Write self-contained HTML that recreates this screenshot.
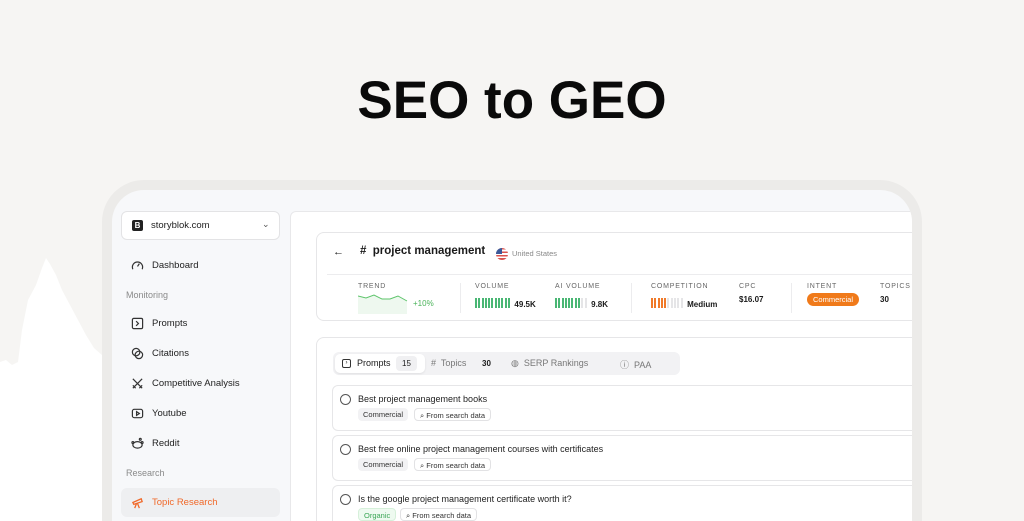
<!DOCTYPE html>
<html style="width:1024px;height:521px;overflow:hidden"><head><meta charset="utf-8"><style>
*{box-sizing:border-box;margin:0;padding:0}
body{width:1024px;height:521px;overflow:hidden;background:#f6f5f3;font-family:"Liberation Sans",sans-serif;position:relative;color:#1a1a1a}
.abs{position:absolute}
h1{position:absolute;top:70px;left:0;width:1024px;text-align:center;font-size:53px;font-weight:700;color:#0a0a0a}
.bezel{left:102px;top:180px;width:820px;height:341px;background:#ecebe9;border-radius:42px 42px 0 0}
.screen{left:112px;top:190px;width:800px;height:331px;background:#f7f8fa;border-radius:32px 32px 0 0;overflow:hidden}
.nav{position:absolute;left:19px;font-size:9.5px;color:#222;display:flex;align-items:center;gap:8px}
.nav svg{width:13px;height:13px}
.sec{position:absolute;left:14px;font-size:9px;color:#8a8a8a}
.main{left:178px;top:21px;width:640px;height:320px;background:#fff;border:1px solid #e8e8ea;border-radius:6px;overflow:hidden}
.card{border:1px solid #e6e6e8;border-radius:8px;background:#fff}
.lbl{font-size:7px;letter-spacing:.8px;color:#666}
.val{font-size:8px;font-weight:700}
.bars{display:inline-flex;gap:1.3px;vertical-align:middle}
.bars i{display:block;width:2px;height:10px}
.row{position:absolute;left:15px;width:600px;height:46px;border:1px solid #e6e6e8;border-radius:6px;background:#fff}
.row .cb{position:absolute;left:7px;top:8px;width:11px;height:11px;border:1.3px solid #555;border-radius:50%}
.row .t{position:absolute;left:25px;top:8px;font-size:9px;color:#222}
.tag{position:absolute;top:22px;height:13px;font-size:7.5px;line-height:13px;padding:0 5px;border-radius:4px}
</style></head><body>
<svg class="abs" style="left:0;top:0" width="110" height="521"><polygon fill="#fff" points="0,362 6,360 12,365 18,362 22,330 28,300 36,285 42,268 46,258 50,264 56,275 62,290 70,305 78,320 86,335 94,348 102,355 102,521 0,521"/></svg>
<h1>SEO to GEO</h1>
<div class="abs bezel"></div>
<div class="abs screen">
  <div class="abs" style="left:9px;top:21px;width:159px;height:29px;background:#fff;border:1px solid #e3e3e5;border-radius:6px"></div>
  <div class="abs" style="left:20px;top:30px;width:11px;height:11px;background:#222;border-radius:2px;color:#fff;font-size:8px;font-weight:700;text-align:center;line-height:11px">B</div>
  <div class="abs" style="left:39px;top:30px;font-size:9.5px;color:#222">storyblok.com</div>
  <div class="abs" style="left:150px;top:29px;font-size:9px;color:#555">⌄</div>
  <div class="nav" style="top:69px"><svg viewBox="0 0 14 14" fill="none" stroke="#333" stroke-width="1.3"><path d="M2 11a5.5 5.5 0 1 1 10 0M7 8l2-3"/></svg>Dashboard</div>
  <div class="sec" style="top:100px">Monitoring</div>
  <div class="nav" style="top:127px"><svg viewBox="0 0 14 14" fill="none" stroke="#333" stroke-width="1.3"><rect x="1.5" y="1.5" width="11" height="11" rx="1.5"/><path d="M5.5 4.5l2.5 2.5-2.5 2.5"/></svg>Prompts</div>
  <div class="nav" style="top:157px"><svg viewBox="0 0 14 14" fill="none" stroke="#333" stroke-width="1.3"><circle cx="5.5" cy="5.5" r="4"/><circle cx="8.5" cy="8.5" r="4"/></svg>Citations</div>
  <div class="nav" style="top:187px"><svg viewBox="0 0 14 14" fill="none" stroke="#333" stroke-width="1.3"><path d="M2 2l10 10M12 2L2 12M2 9l3 3M9 12l3-3"/></svg>Competitive Analysis</div>
  <div class="nav" style="top:217px"><svg viewBox="0 0 14 14" fill="none" stroke="#333" stroke-width="1.3"><rect x="1.5" y="2.5" width="11" height="9" rx="2"/><path d="M6 5v4l3-2z"/></svg>Youtube</div>
  <div class="nav" style="top:247px"><svg viewBox="0 0 14 14" fill="none" stroke="#333" stroke-width="1.3"><ellipse cx="7" cy="8.5" rx="5" ry="3.5"/><circle cx="10" cy="2.5" r="1"/><circle cx="2" cy="6" r="1"/><circle cx="12" cy="6" r="1"/></svg>Reddit</div>
  <div class="sec" style="top:278px">Research</div>
  <div class="abs" style="left:9px;top:298px;width:159px;height:29px;background:#eeeff1;border-radius:6px"></div>
  <div class="nav" style="top:306px;color:#f0692a"><svg viewBox="0 0 14 14" fill="none" stroke="#f0692a" stroke-width="1.4"><path d="M2 7l9-4 1 3-9 3zM6 8l-2 5M7 8l2 5"/></svg>Topic Research</div>

  <div class="abs main">
    <div class="abs card" style="left:25px;top:20px;width:620px;height:89px">
      <div class="abs" style="left:16px;top:13px;font-size:11px">←</div>
      <div class="abs" style="left:43px;top:12px;font-size:11.5px;font-weight:700">#&nbsp; project management</div>
      <div class="abs" style="left:179px;top:15px;width:12px;height:12px;border-radius:50%;overflow:hidden;background:repeating-linear-gradient(#d9534f 0 1.7px,#fff 1.7px 3.4px)"><div style="width:6px;height:6px;background:#3c5a9a"></div></div>
      <div class="abs" style="left:195px;top:16px;font-size:7.5px;color:#888">United States</div>
      <div class="abs" style="left:10px;top:41px;width:620px;height:1px;background:#ececee"></div>
      <div class="abs lbl" style="left:41px;top:50px">TREND</div>
      <svg class="abs" style="left:41px;top:59px" width="50" height="22"><path d="M0 4l8 2 8-3 8 4 8 0 8-3 9 5V22H0z" fill="#eef8ef"/><path d="M0 4l8 2 8-3 8 4 8 0 8-3 9 5" fill="none" stroke="#5cc46a" stroke-width="1"/></svg>
      <div class="abs" style="left:96px;top:66px;font-size:8px;color:#4bb35a">+10%</div>
      <div class="abs" style="left:143px;top:50px;width:1px;height:30px;background:#ececee"></div>
      <div class="abs lbl" style="left:158px;top:50px">VOLUME</div>
      <div class="abs" style="left:158px;top:61px"><span class="bars"><i style="background:#49b774"></i><i style="background:#49b774"></i><i style="background:#49b774"></i><i style="background:#49b774"></i><i style="background:#49b774"></i><i style="background:#49b774"></i><i style="background:#49b774"></i><i style="background:#49b774"></i><i style="background:#49b774"></i><i style="background:#49b774"></i><i style="background:#49b774"></i></span> <span class="val">49.5K</span></div>
      <div class="abs lbl" style="left:238px;top:50px">AI VOLUME</div>
      <div class="abs" style="left:238px;top:61px"><span class="bars"><i style="background:#49b774"></i><i style="background:#49b774"></i><i style="background:#49b774"></i><i style="background:#49b774"></i><i style="background:#49b774"></i><i style="background:#49b774"></i><i style="background:#49b774"></i><i style="background:#49b774"></i><i style="background:#e5e5e7"></i><i style="background:#e5e5e7"></i></span> <span class="val">9.8K</span></div>
      <div class="abs" style="left:314px;top:50px;width:1px;height:30px;background:#ececee"></div>
      <div class="abs lbl" style="left:334px;top:50px">COMPETITION</div>
      <div class="abs" style="left:334px;top:61px"><span class="bars"><i style="background:#f07a2a"></i><i style="background:#f07a2a"></i><i style="background:#f07a2a"></i><i style="background:#f07a2a"></i><i style="background:#f07a2a"></i><i style="background:#e5e5e7"></i><i style="background:#e5e5e7"></i><i style="background:#e5e5e7"></i><i style="background:#e5e5e7"></i><i style="background:#e5e5e7"></i></span> <span class="val">Medium</span></div>
      <div class="abs lbl" style="left:422px;top:50px">CPC</div>
      <div class="abs val" style="left:422px;top:62px">$16.07</div>
      <div class="abs" style="left:474px;top:50px;width:1px;height:30px;background:#ececee"></div>
      <div class="abs lbl" style="left:490px;top:50px">INTENT</div>
      <div class="abs" style="left:490px;top:60px;height:13px;padding:0 6px;border-radius:7px;background:#f07a1a;color:#fff;font-size:7.5px;line-height:13px">Commercial</div>
      <div class="abs lbl" style="left:563px;top:50px">TOPICS</div>
      <div class="abs val" style="left:563px;top:62px">30</div>
    </div>
    <div class="abs card" style="left:25px;top:125px;width:620px;height:300px">
      <div class="abs" style="left:16px;top:14px;width:347px;height:23px;background:#f2f2f4;border-radius:6px"></div>
      <div class="abs" style="left:18px;top:16px;width:90px;height:19px;background:#fff;border-radius:5px;box-shadow:0 1px 2px rgba(0,0,0,.08)"></div>
      <div class="abs" style="left:25px;top:21px;width:9px;height:9px;border:1.2px solid #333;border-radius:2px;font-size:6px;line-height:6px;text-align:center">›</div>
      <div class="abs" style="left:40px;top:20px;font-size:9px">Prompts</div>
      <div class="abs" style="left:79px;top:18px;width:21px;height:15px;background:#f0f0f2;border-radius:4px;font-size:8px;line-height:15px;text-align:center">15</div>
      <div class="abs" style="left:114px;top:20px;font-size:9px;color:#777">#&nbsp; Topics</div>
      <div class="abs" style="left:165px;top:21px;font-size:8px;font-weight:700">30</div>
      <div class="abs" style="left:194px;top:20px;font-size:9px;color:#777">◍&nbsp; SERP Rankings</div>
      <div class="abs" style="left:303px;top:20px;font-size:9px;color:#777">ⓘ&nbsp; PAA</div>
      <div class="row" style="top:47px"><div class="cb"></div><div class="t">Best project management books</div><div class="tag" style="left:25px;background:#f2f2f4;color:#333">Commercial</div><div class="tag" style="left:81px;border:1px solid #e2e2e4;color:#333">⌕ From search data</div></div>
      <div class="row" style="top:97px"><div class="cb"></div><div class="t">Best free online project management courses with certificates</div><div class="tag" style="left:25px;background:#f2f2f4;color:#333">Commercial</div><div class="tag" style="left:81px;border:1px solid #e2e2e4;color:#333">⌕ From search data</div></div>
      <div class="row" style="top:147px"><div class="cb"></div><div class="t">Is the google project management certificate worth it?</div><div class="tag" style="left:25px;background:#eefaf0;border:1px solid #d6f0da;color:#3aa655">Organic</div><div class="tag" style="left:67px;border:1px solid #e2e2e4;color:#333">⌕ From search data</div></div>
    </div>
  </div>
</div>
</body></html>
